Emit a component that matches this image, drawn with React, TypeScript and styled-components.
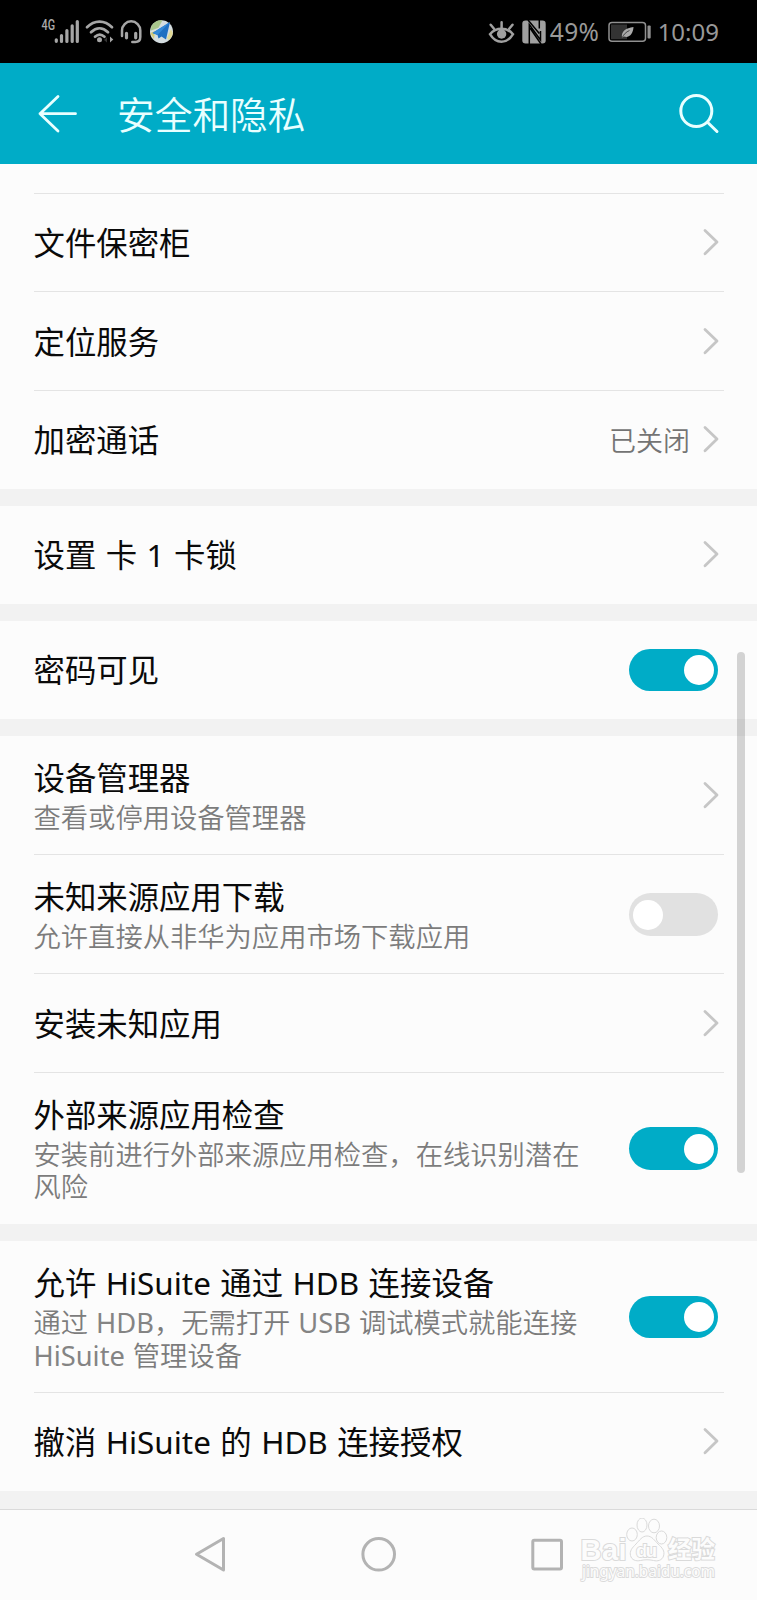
import React from "react";
import styled, { createGlobalStyle } from "styled-components";

const GlobalStyle = createGlobalStyle`
  *, *::before, *::after { box-sizing: border-box; }
  body { margin: 0; background: #fcfcfc; }
  svg { display: block; flex: none; }
`;

const TEAL = "#00acc7";

const Phone = styled.div`
  width: 757px;
  height: 1600px;
  position: relative;
  display: flex;
  flex-direction: column;
  overflow: hidden;
  background: #fcfcfc;
  color: #0a0a0a;
  font-family: "Noto Sans", "Noto Sans CJK SC", sans-serif;
`;

const StatusBar = styled.div`
  flex: none;
  height: 63px;
  padding: 0 38px 0 40px;
  display: flex;
  align-items: center;
  justify-content: space-between;
  background: #000;
`;

const StatusGroup = styled.div`
  display: flex;
  align-items: center;
`;

const StatusText = styled.span<{ $size: number; $spacing?: number }>`
  padding-top: 1px;
  font-size: ${(p) => p.$size}px;
  line-height: 32px;
  letter-spacing: ${(p) => p.$spacing ?? 0}px;
  color: #999;
`;

const BatteryBox = styled.div`
  margin: 0 4.5px 0 8px;
`;

const Header = styled.header`
  flex: none;
  height: 101px;
  padding: 0 37px;
  display: flex;
  align-items: center;
  background: ${TEAL};
`;

const HeaderTitle = styled.h1`
  flex: 1;
  margin: 0 0 0 40px;
  padding-top: 3px;
  font-size: 37.7px;
  font-weight: 350;
  line-height: 50px;
  color: #e9ffff;
`;

const List = styled.main`
  flex: none;
  display: flex;
  flex-direction: column;
  gap: 17px;
  height: 1345px;
  background: #f2f2f2;
`;

const Section = styled.section`
  padding: 0 33.5px;
  background: #fcfcfc;
`;

const Row = styled.div<{ $h: number; $line?: boolean }>`
  height: ${(p) => p.$h}px;
  padding-right: 6px;
  display: flex;
  align-items: center;
  justify-content: space-between;
  box-shadow: ${(p) => (p.$line ? "inset 0 -1px #e4e4e4" : "none")};
`;

const Texts = styled.div<{ $double: boolean }>`
  width: 560px;
  padding-top: ${(p) => (p.$double ? 1 : 0)}px;
  display: flex;
  flex-direction: column;
  gap: 4px;
`;

const Title = styled.div`
  font-size: 31.4px;
  line-height: 40px;
  word-spacing: 1.3px;
  white-space: nowrap;
`;

const Sub = styled.div`
  font-size: 27.3px;
  line-height: 32.3px;
  font-weight: 350;
  word-spacing: 0.8px;
  color: #7c7c7c;
`;

const Latin = styled.span`
  font-weight: 400;
  color: #848484;
`;

const End = styled.div`
  display: flex;
  align-items: center;
`;

const Value = styled.span`
  margin-right: 12px;
  padding-top: 1px;
  font-size: 27px;
  line-height: 36px;
  font-weight: 350;
  color: #747474;
`;

const ChevronIcon = styled.svg`
  margin-right: -1.5px;
`;

const Switch = styled.div<{ $on: boolean }>`
  width: 88.5px;
  height: 42.5px;
  flex: none;
  padding: 0 4px;
  display: flex;
  align-items: center;
  justify-content: ${(p) => (p.$on ? "flex-end" : "flex-start")};
  border-radius: 22px;
  background: ${(p) => (p.$on ? TEAL : "#e1e1e1")};
`;

const Knob = styled.div`
  width: 30px;
  height: 30px;
  border-radius: 50%;
  background: #fff;
`;

const ScrollThumb = styled.div`
  position: absolute;
  top: 652px;
  right: 12px;
  width: 8px;
  height: 521px;
  border-radius: 4px;
  background: rgba(0, 0, 0, 0.16);
`;

const NavBar = styled.nav`
  flex: 1;
  padding: 0 193px 2px 194px;
  display: flex;
  align-items: center;
  justify-content: space-between;
  border-top: 1px solid #dadada;
  background: #fcfcfc;
`;

const Watermark = styled.svg`
  position: absolute;
  right: 34px;
  bottom: 14px;
`;

const Chevron = () => (
  <ChevronIcon width="17" height="30" viewBox="0 0 17 30" fill="none" stroke="#c6c6c6" strokeWidth="2.8" strokeLinecap="round" strokeLinejoin="round">
    <path d="M3 2.5 15 14 3 25.7" />
  </ChevronIcon>
);

type ItemProps = {
  h: number;
  title: string;
  sub?: string;
  line?: boolean;
  value?: string;
  toggle?: boolean;
};

const Item = ({ h, title, sub, line, value, toggle }: ItemProps) => (
  <Row $h={h} $line={line}>
    <Texts $double={!!sub}>
      <Title>{title}</Title>
      {sub && (
        <Sub>
          {sub.split(/([A-Za-z]+)/).map((part, i) => (i % 2 ? <Latin key={i}>{part}</Latin> : part))}
        </Sub>
      )}
    </Texts>
    <End>
      {value && <Value>{value}</Value>}
      {toggle === undefined ? <Chevron /> : <Switch $on={toggle}><Knob /></Switch>}
    </End>
  </Row>
);

const StatusIcons = () => (
  <svg width="134" height="30" viewBox="40 17 134 30" fill="none">
    <text x="41.5" y="30" fill="#aaa" fontSize="14.5" fontWeight="500" fontFamily="Roboto" textLength="13.5" lengthAdjust="spacingAndGlyphs">4G</text>
    <g stroke="#a6a6a6" strokeWidth="3.2" strokeLinecap="round">
      <path d="M56.3 39.800v1.500M61.500 35.500v6M66.900 30.500v11M72.200 25.800v15.700M77.300 21.500v20" />
    </g>
    <g stroke="#a6a6a6" strokeWidth="2.700" strokeLinecap="round">
      <path d="M87 27.200C94.300 19.700 104.700 19.700 112 27.200M91 32.200C96.300 27 102.700 27 108 32.200M95 36.700C98 34 101.500 34 104.500 36.700" />
    </g>
    <circle cx="99.500" cy="39.800" r="2.500" fill="#a6a6a6" />
    <path d="M107 37.300v5.200l-3-2.600z" fill="#333" />
    <path d="M110 36.500v6l3.300-3z" fill="#a6a6a6" />
    <g stroke="#a6a6a6" strokeWidth="2.500" strokeLinecap="round">
      <path d="M122 36v-5.500a9 9 0 0 1 18.300 0V37c0 3.500-2 5-5 5h-3" />
      <path d="M126.500 33.300v4.500M135.700 33.300v4.500" strokeWidth="3.200" />
    </g>
    <circle cx="161.500" cy="31.700" r="11.500" fill="#d4dde0" />
    <path d="M151.500 26a11.500 11.500 0 0 1 11-5.800l-4 7.500-7.800 3z" fill="#a9c78d" />
    <path d="M150.200 33 155 31l-1 8z" fill="#d6cc78" />
    <path d="m167 38 4-9 1.800 4c-.5 3-2 5.500-4 7.300z" fill="#e1d995" />
    <path d="M170 22 152.500 33l5 2 1 3.500 3-2 4.500 3z" fill="#1f70c2" />
    <path d="M170 22 152.500 33l5 2z" fill="#3389d8" />
  </svg>
);

const EyeNfc = () => (
  <svg width="62" height="30" viewBox="488 17 62 30" fill="none">
    <g stroke="#a0a0a0" strokeWidth="2.500" strokeLinecap="round">
      <path d="M490 34.200C496 27 507 27 513 34.200 507 44.300 496 44.300 490 34.200Z" />
      <path d="M501.600 22.200v5.500M490.700 24.800l3.300 4M512.500 24.800l-3.300 4" />
    </g>
    <circle cx="501.600" cy="34" r="4.700" fill="#a0a0a0" />
    <rect x="522.300" y="20.500" width="23.400" height="23" rx="3.200" fill="#a0a0a0" />
    <path d="M529.300 44V24.500L540.500 40V31M539.300 20V28.500M528 20l11.300 13.500M530 28l11 16" stroke="#000" strokeWidth="1.500" />
  </svg>
);

const Battery = () => (
  <svg width="46" height="30" viewBox="607 17 46 30" fill="none">
    <rect x="609" y="22.500" width="36.500" height="18.700" rx="3" stroke="#909090" strokeWidth="1.500" />
    <rect x="611" y="24.500" width="16" height="14.700" fill="#333" />
    <path d="M622 38c-1-7 4-10 11.500-11-.3 6-4 11.500-9.500 9.500z" fill="#aaa" />
    <path d="M622 38c2-4 4-6 7.500-7.500" stroke="#444" />
    <rect x="647.500" y="25.500" width="3.200" height="13" rx="1" fill="#909090" />
  </svg>
);

const BaiduMark = () => (
  <Watermark width="144" height="68" viewBox="579 1518 144 68" fill="#fcfcfc" stroke="#dadada" strokeWidth="1">
    <g fontFamily='"Liberation Sans", "Noto Sans CJK SC", sans-serif' paintOrder="stroke" strokeWidth="2">
      <text x="580.500" y="1560" fontSize="29" fontWeight="700" textLength="46">Bai</text>
      <text x="668" y="1558" fontSize="23.500" fontWeight="700" textLength="47">经验</text>
      <text x="582" y="1577" fontSize="15.500" strokeWidth="1.800" textLength="133" fontFamily='"Noto Sans", sans-serif'>jingyan.baidu.com</text>
    </g>
    <ellipse cx="632" cy="1534.500" rx="5.300" ry="6.500" />
    <ellipse cx="642" cy="1525" rx="5" ry="7" />
    <ellipse cx="654" cy="1526" rx="5.500" ry="6.800" />
    <ellipse cx="661.500" cy="1537.500" rx="5.300" ry="6.500" />
    <path d="M647 1536c5 0 7.500 4.500 11 8 4.500 4 7 7 5.500 12-1.500 4.500-6 5.500-10 4.500-5-1-8-1-13 0-4.500 1-9-.5-10-5-1-4.500 1.500-7.500 5.500-11.500 3.500-3.500 6-8 11-8z" />
    <text x="636" y="1557" fontSize="19" fontWeight="600" strokeWidth="1.800" paintOrder="stroke" fontFamily='"Liberation Sans", sans-serif' textLength="21">du</text>
  </Watermark>
);

export default function App() {
  return (
    <>
      <GlobalStyle />
      <Phone>
        <StatusBar>
          <StatusGroup><StatusIcons /></StatusGroup>
          <StatusGroup>
            <EyeNfc />
            <StatusText $size={24.5} $spacing={0.3}>49%</StatusText>
            <BatteryBox><Battery /></BatteryBox>
            <StatusText $size={24}>10:09</StatusText>
          </StatusGroup>
        </StatusBar>
        <Header>
          <svg width="40" height="42" viewBox="38 93 40 42" fill="none" stroke="#e9ffff" strokeWidth="2.800" strokeLinecap="round" strokeLinejoin="round">
            <path d="M59 96.500 41 113.700 59 131M41 113.700H76.500" />
          </svg>
          <HeaderTitle>安全和隐私</HeaderTitle>
          <svg width="42" height="42" viewBox="678 93 42 42" fill="none" stroke="#e9ffff" strokeWidth="3" strokeLinecap="round">
            <circle cx="696.300" cy="111" r="15.500" />
            <path d="m707.500 122.200 9.500 9.300" />
          </svg>
        </Header>
        <List>
          <Section>
            <Row $h={30} $line />
            <Item h={98} title="文件保密柜" line />
            <Item h={99} title="定位服务" line />
            <Item h={98} title="加密通话" value="已关闭" />
          </Section>
          <Section><Item h={98} title="设置 卡 1 卡锁" /></Section>
          <Section><Item h={98} title="密码可见" toggle /></Section>
          <Section>
            <Item h={119} title="设备管理器" sub="查看或停用设备管理器" line />
            <Item h={119} title="未知来源应用下载" sub="允许直接从非华为应用市场下载应用" toggle={false} line />
            <Item h={99} title="安装未知应用" line />
            <Item h={151} title="外部来源应用检查" sub="安装前进行外部来源应用检查，在线识别潜在风险" toggle />
          </Section>
          <Section>
            <Item h={152} title="允许 HiSuite 通过 HDB 连接设备" sub="通过 HDB，无需打开 USB 调试模式就能连接 HiSuite 管理设备" toggle line />
            <Item h={98} title="撤消 HiSuite 的 HDB 连接授权" />
          </Section>
        </List>
        <NavBar>
          <svg width="33" height="38" viewBox="194 1535 33 38" fill="none" stroke="#b3b3b3" strokeWidth="3" strokeLinejoin="round">
            <path d="M196.500 1554.300 223.500 1538.500V1570Z" />
          </svg>
          <svg width="36" height="38" viewBox="361 1535 36 38" fill="none" stroke="#b3b3b3" strokeWidth="3">
            <circle cx="378.700" cy="1554.300" r="15.800" />
          </svg>
          <svg width="33" height="38" viewBox="531 1535 33 38" fill="none" stroke="#b3b3b3" strokeWidth="3">
            <rect x="532.800" y="1540.300" width="28.700" height="28.700" rx="1.500" />
          </svg>
        </NavBar>
        <ScrollThumb />
        <BaiduMark />
      </Phone>
    </>
  );
}
